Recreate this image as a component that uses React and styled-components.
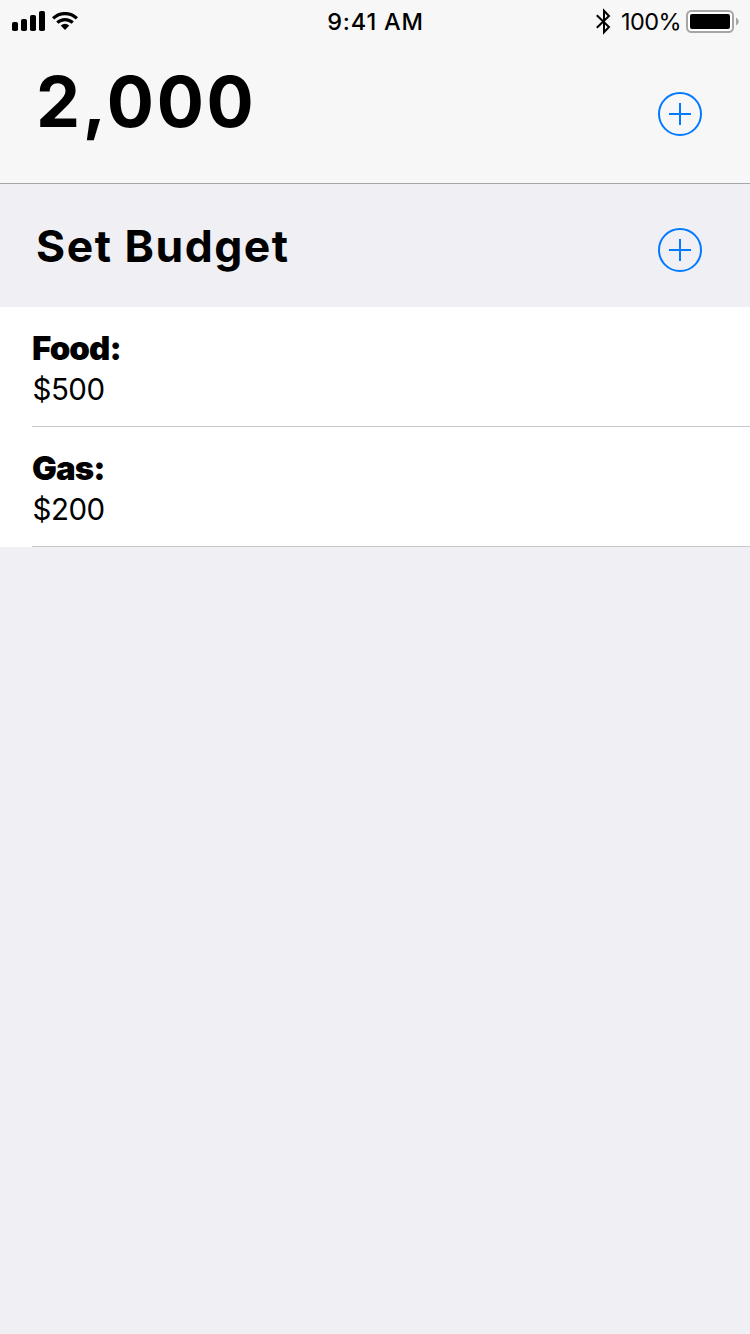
import React from "react";
import styled, { createGlobalStyle } from "styled-components";

const GlobalStyle = createGlobalStyle`
  * { box-sizing: border-box; }
  body {
    margin: 0;
    background: #efeff4;
    color: #000;
    font-family: Inter, "Liberation Sans", sans-serif;
  }
`;

const Screen = styled.main`
  width: 750px;
  height: 1334px;
  background: #efeff4;
  overflow: hidden;
`;

const Header = styled.header`
  height: 184px;
  background: #f7f7f7;
  border-bottom: 1px solid #a5a5a9;
`;

const StatusBar = styled.div`
  display: grid;
  grid-template-columns: 1fr auto 1fr;
  align-items: center;
  height: 42px;
  padding: 0 11px 0 12px;
`;

const StatusGroup = styled.div`
  display: flex;
  align-items: center;
  height: 42px;
  justify-content: ${({ $end }) => ($end ? "flex-end" : "flex-start")};
`;

const Time = styled.span`
  padding-top: 2px;
  font-size: 23.5px;
  line-height: 40px;
  font-weight: 550;
  letter-spacing: 0.8px;
`;

const Percent = styled.span`
  padding-top: 2px;
  margin: 0 5px 0 10px;
  font-size: 23.5px;
  line-height: 40px;
  letter-spacing: -0.6px;
`;

const HeadingRow = styled.div`
  display: flex;
  justify-content: space-between;
  align-items: flex-start;
  padding: ${({ $top }) => $top}px 48px 0 36px;
`;

const Total = styled.h1`
  margin: 0;
  font-size: 70px;
  line-height: 80px;
  font-weight: 700;
  letter-spacing: 2.7px;
`;

const BudgetBar = styled.section`
  height: 123px;
`;

const SectionTitle = styled.h2`
  margin: 0;
  font-size: 44.5px;
  line-height: 54px;
  font-weight: 680;
  letter-spacing: 1.5px;
`;

const AddButton = styled.button`
  display: block;
  width: 44px;
  height: 44px;
  margin: ${({ $offset }) => $offset}px 0 0;
  padding: 0;
  border: 0;
  background: none;
  color: #007aff;
`;

const List = styled.ul`
  margin: 0;
  padding: 0 0 0 32px;
  list-style: none;
  background: #fff;
`;

const Item = styled.li`
  height: 120px;
  padding-top: 21px;
  border-bottom: 1px solid #c8c7cc;
`;

const Name = styled.div`
  font-size: 33px;
  line-height: 40px;
  font-weight: 900;
  letter-spacing: -0.95px;
`;

const Amount = styled.div`
  padding-left: 0.5px;
  font-size: 29.5px;
  line-height: 42px;
  letter-spacing: -0.5px;
`;

const SignalIcon = () => (
  <svg width="33" height="20" viewBox="0 0 33 20">
    <rect x="0" y="11" width="6" height="9" rx="1.8" />
    <rect x="9" y="8" width="6" height="12" rx="1.8" />
    <rect x="18" y="4" width="6" height="16" rx="1.8" />
    <rect x="27" y="0" width="6" height="20" rx="1.8" />
  </svg>
);

const WifiSvg = styled.svg`
  margin-left: 7px;
`;

const WifiIcon = () => (
  <WifiSvg width="26" height="18" viewBox="0 0 26 18" fill="none" stroke="#000" strokeWidth="3.2">
    <path d="M1.1 6.4 A17 17 0 0 1 24.9 6.4" />
    <path d="M5.3 10.7 A11 11 0 0 1 20.7 10.7" />
    <path d="M8.7 13.6 Q13 10 17.3 13.6 L13 17.9 Z" fill="#000" stroke="none" />
  </WifiSvg>
);

const BluetoothIcon = () => (
  <svg width="15" height="27" viewBox="0 0 15 27" fill="none" stroke="#000" strokeWidth="2">
    <path d="M0.8 7.2 L13 19 L8 24.3 V2.7 L13 8 L0.8 19.8" />
  </svg>
);

const BatteryIcon = () => (
  <svg width="53" height="23" viewBox="0 0 53 23">
    <rect x="1" y="1" width="46" height="21" rx="4.5" fill="#fff" stroke="#a6a6a6" strokeWidth="2" />
    <rect x="4" y="4" width="40" height="15" rx="2" />
    <path d="M50 7.5 Q52.7 9 52.7 11.5 Q52.7 14 50 15.5 Z" fill="#a6a6a6" />
  </svg>
);

const PlusIcon = () => (
  <svg width="44" height="44" viewBox="0 0 44 44" fill="none" stroke="currentColor" strokeWidth="2">
    <circle cx="22" cy="22" r="21" />
    <path d="M11 22 H33 M22 11 V33" />
  </svg>
);

const budgets = [
  { name: "Food:", amount: "$500" },
  { name: "Gas:", amount: "$200" },
];

export default function App() {
  return (
    <Screen>
      <GlobalStyle />
      <Header>
        <StatusBar>
          <StatusGroup>
            <SignalIcon />
            <WifiIcon />
          </StatusGroup>
          <Time>9:41 AM</Time>
          <StatusGroup $end>
            <BluetoothIcon />
            <Percent>100%</Percent>
            <BatteryIcon />
          </StatusGroup>
        </StatusBar>
        <HeadingRow $top={20}>
          <Total>2,000</Total>
          <AddButton $offset={30} aria-label="Add funds">
            <PlusIcon />
          </AddButton>
        </HeadingRow>
      </Header>
      <BudgetBar>
        <HeadingRow $top={35}>
          <SectionTitle>Set Budget</SectionTitle>
          <AddButton $offset={9} aria-label="Add budget">
            <PlusIcon />
          </AddButton>
        </HeadingRow>
      </BudgetBar>
      <List>
        {budgets.map(({ name, amount }) => (
          <Item key={name}>
            <Name>{name}</Name>
            <Amount>{amount}</Amount>
          </Item>
        ))}
      </List>
    </Screen>
  );
}
